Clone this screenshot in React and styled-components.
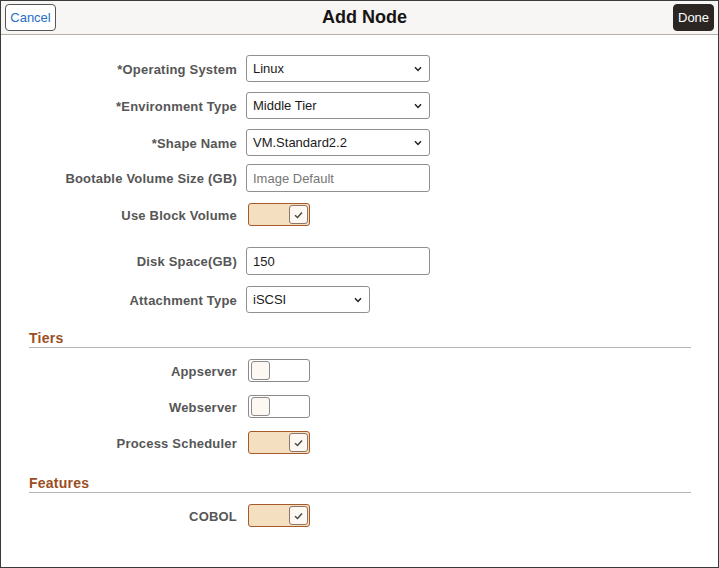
import React from "react";
import styled, { createGlobalStyle } from "styled-components";

const Global = createGlobalStyle`
  html, body { margin: 0; padding: 0; background: #fff; }
  body { font-family: "Liberation Sans", Arial, sans-serif; }
  * { box-sizing: border-box; }
`;

const Frame = styled.div`
  width: 719px;
  height: 568px;
  border: 1px solid #3a3a3a;
  background: #fff;
  display: flex;
  flex-direction: column;
`;

const Header = styled.div`
  height: 34px;
  flex: none;
  display: flex;
  align-items: center;
  padding: 0 4px 0 4px;
  background: #f7f6f5;
  border-bottom: 1px solid #b5b0ab;
`;

const HeaderButton = styled.button`
  height: 27px;
  margin-top: -1px;
  border-radius: 4px;
  font-family: "Liberation Sans", Arial, sans-serif;
  font-size: 13px;
  padding: 0 4px;
  cursor: pointer;
  border: 1px solid ${(p) => (p.$primary ? "#2b2624" : "#555")};
  background: ${(p) => (p.$primary ? "#2b2624" : "#fff")};
  color: ${(p) => (p.$primary ? "#fff" : "#1f6fc5")};
  width: ${(p) => p.$w}px;
`;

const Title = styled.h1`
  flex: 1;
  margin: 0;
  text-align: center;
  font-size: 18px;
  font-weight: bold;
  color: #161513;
`;

const Body = styled.div`
  padding-top: 20px;
  display: flex;
  flex-direction: column;
`;

const Row = styled.div`
  display: grid;
  grid-template-columns: 236px 1fr;
  column-gap: 9px;
  align-items: center;
  margin-top: ${(p) => p.$mt || 0}px;
`;

const Label = styled.label`
  text-align: right;
  font-size: 13px;
  letter-spacing: 0.2px;
  font-weight: bold;
  color: #565656;
  padding-top: 1px;
`;

const FieldBox = styled.div`
  position: relative;
  width: ${(p) => p.$w}px;
  height: ${(p) => p.$h}px;
  border: 1px solid #8f8f8f;
  border-radius: 3px;
  display: flex;
  align-items: center;
  padding: 0 6px;
  font-size: 13px;
  color: ${(p) => (p.$placeholder ? "#767676" : "#1a1a1a")};
  background: #fff;
`;

const FieldText = styled.span`
  flex: 1;
`;

const Chevron = styled.svg`
  width: 8px;
  height: 6px;
  margin-right: 1px;
`;

const Toggle = styled.div`
  margin-left: 2px;
  width: 62px;
  height: 23px;
  border-radius: 3px;
  border: 1px solid ${(p) => (p.$on ? "#a8592c" : "#8a8a8a")};
  background: ${(p) => (p.$on ? "#f5dfc1" : "#fff")};
  display: flex;
  align-items: center;
  justify-content: ${(p) => (p.$on ? "flex-end" : "flex-start")};
  padding: 0 1px 0 2px;
`;

const Knob = styled.div`
  width: 19px;
  height: 19px;
  border-radius: 3px;
  border: 1px solid ${(p) => (p.$on ? "#8c7466" : "#8a8a8a")};
  background: #fdf8f2;
  display: flex;
  align-items: center;
  justify-content: center;
`;

const Section = styled.div`
  margin: ${(p) => p.$mt}px 27px 0 28px;
  border-bottom: 1px solid #b3b3b3;
  padding-bottom: 1px;
  line-height: 16px;
  font-size: 14px;
  letter-spacing: 0.25px;
  font-weight: bold;
  color: #9c4e22;
`;

function Select({ value, w = 184 }) {
  return (
    <FieldBox $w={w} $h={27}>
      <FieldText>{value}</FieldText>
      <Chevron viewBox="0 0 8 6">
        <path d="M1 1.2 L4 4.4 L7 1.2" fill="none" stroke="#222" strokeWidth="1.5" />
      </Chevron>
    </FieldBox>
  );
}

function Switch({ on }) {
  return (
    <Toggle $on={on}>
      <Knob $on={on}>
        {on && (
          <svg width="9" height="8" viewBox="0 0 9 8">
            <path d="M1 4.2 L3.5 6.5 L8 1.5" fill="none" stroke="#4a4a4a" strokeWidth="1.5" />
          </svg>
        )}
      </Knob>
    </Toggle>
  );
}

export default function App() {
  return (
    <>
      <Global />
      <Frame>
        <Header>
          <HeaderButton $w={51}>Cancel</HeaderButton>
          <Title>Add Node</Title>
          <HeaderButton $primary $w={41}>Done</HeaderButton>
        </Header>
        <Body>
          <Row>
            <Label>*Operating System</Label>
            <Select value="Linux" />
          </Row>
          <Row $mt={10}>
            <Label>*Environment Type</Label>
            <Select value="Middle Tier" />
          </Row>
          <Row $mt={10}>
            <Label>*Shape Name</Label>
            <Select value="VM.Standard2.2" />
          </Row>
          <Row $mt={8}>
            <Label>Bootable Volume Size (GB)</Label>
            <FieldBox $w={184} $h={28} $placeholder>Image Default</FieldBox>
          </Row>
          <Row $mt={11}>
            <Label>Use Block Volume</Label>
            <Switch on />
          </Row>
          <Row $mt={21}>
            <Label>Disk Space(GB)</Label>
            <FieldBox $w={184} $h={28}>150</FieldBox>
          </Row>
          <Row $mt={11}>
            <Label>Attachment Type</Label>
            <Select value="iSCSI" w={124} />
          </Row>
          <Section $mt={17}>Tiers</Section>
          <Row $mt={11}>
            <Label>Appserver</Label>
            <Switch />
          </Row>
          <Row $mt={13}>
            <Label>Webserver</Label>
            <Switch />
          </Row>
          <Row $mt={13}>
            <Label>Process Scheduler</Label>
            <Switch on />
          </Row>
          <Section $mt={21}>Features</Section>
          <Row $mt={11}>
            <Label>COBOL</Label>
            <Switch on />
          </Row>
        </Body>
      </Frame>
    </>
  );
}
